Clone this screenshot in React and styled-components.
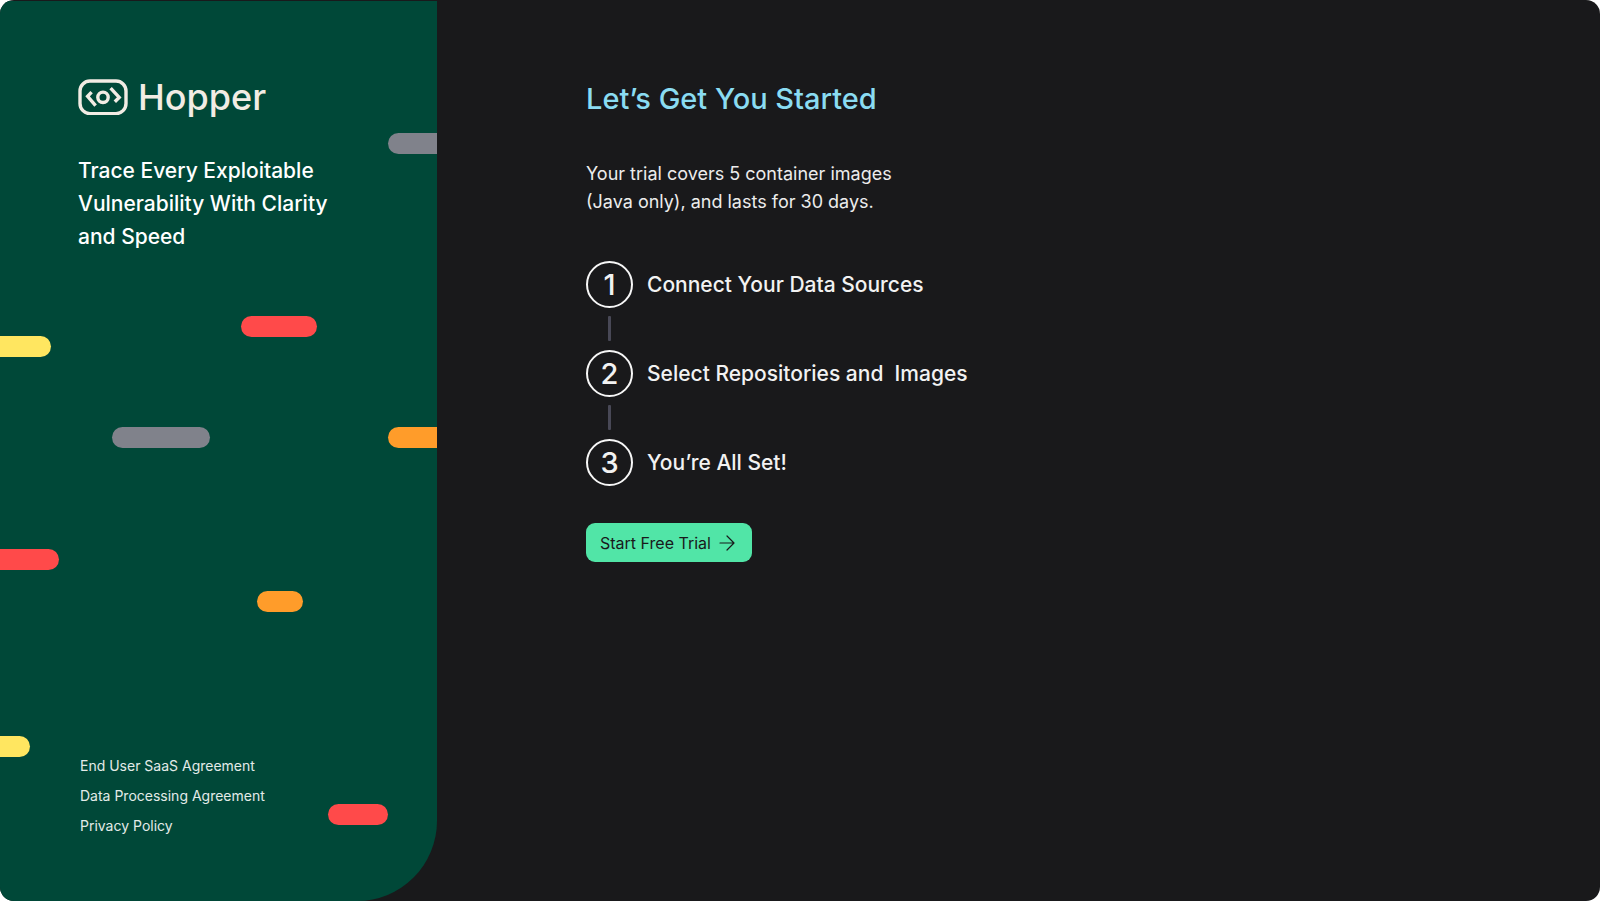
import React from 'react';
import styled, { createGlobalStyle } from 'styled-components';

const GlobalStyle = createGlobalStyle`
  *, *::before, *::after { box-sizing: border-box; }
  body {
    margin: 0;
    background: #ffffff;
    font-family: Inter, "Liberation Sans", sans-serif;
  }
`;

const Page = styled.div`
  display: flex;
  min-height: 100vh;
  padding-top: 1px;
  border-radius: 14px;
  overflow: hidden;
  background: #19191b;
`;

const Sidebar = styled.aside`
  position: relative;
  display: flex;
  flex-direction: column;
  justify-content: space-between;
  flex: 0 0 437px;
  padding: 78px 78px 65px;
  overflow: hidden;
  border-bottom-right-radius: 80px;
  background: #004838;
`;

const Decor = styled.div`
  position: absolute;
  inset: 0;
`;

const pillColors = {
  red: '#ff4a4a',
  yellow: '#ffe660',
  orange: '#ff9c2a',
  gray: '#80828b',
};

const Pill = styled.span`
  position: absolute;
  top: ${(p) => p.$top}px;
  left: ${(p) => p.$left}px;
  width: ${(p) => p.$width}px;
  height: 21px;
  border-radius: 11px;
  background: ${(p) => pillColors[p.$color]};
`;

const Intro = styled.div`
  position: relative;
  display: flex;
  flex-direction: column;
  gap: 39px;
`;

const Brand = styled.div`
  display: flex;
  align-items: center;
  gap: 10px;
  height: 36px;
  color: #f2ece4;
`;

const BrandName = styled.span`
  font-size: 36px;
  line-height: 36px;
  font-weight: 500;
`;

const Tagline = styled.p`
  margin: 0;
  color: #ffffff;
  font-size: 21px;
  line-height: 33px;
  font-weight: 500;
  white-space: nowrap;
`;

const LegalNav = styled.nav`
  position: relative;
  display: flex;
  flex-direction: column;
  align-items: flex-start;
  gap: 10px;
  padding-left: 2px;
`;

const LegalLink = styled.a`
  color: #e3ebe8;
  font-size: 14px;
  line-height: 20px;
  text-decoration: none;
`;

const Main = styled.main`
  flex: 1;
  padding: 78px 149px;
`;

const Title = styled.h1`
  margin: 0 0 41px;
  color: #8adcf2;
  font-size: 29px;
  line-height: 40px;
  font-weight: 500;
`;

const Lead = styled.p`
  margin: 0 0 45px;
  color: #ececec;
  font-size: 18px;
  line-height: 28px;
`;

const Steps = styled.ol`
  display: flex;
  flex-direction: column;
  gap: 42px;
  margin: 0 0 37px;
  padding: 0;
  list-style: none;
`;

const Step = styled.li`
  position: relative;
  display: flex;
  align-items: center;
  gap: 14px;
  color: #f2f2f2;
  font-size: 21px;
  line-height: 31px;
  font-weight: 500;
  white-space: pre;

  &:not(:last-child)::after {
    content: "";
    position: absolute;
    top: calc(100% + 8px);
    left: 22px;
    width: 3px;
    height: 25px;
    border-radius: 1px;
    background: #484856;
  }
`;

const StepNumber = styled.span`
  display: flex;
  align-items: center;
  justify-content: center;
  width: 47px;
  height: 47px;
  border: 2px solid #f7f7f7;
  border-radius: 50%;
  font-size: 29px;
`;

const StartButton = styled.button`
  display: flex;
  align-items: center;
  gap: 8px;
  height: 39px;
  padding: 0 17px 0 14px;
  border: 0;
  border-radius: 9px;
  background: #51e5a7;
  color: #19191b;
  font-family: inherit;
  font-size: 16px;
  line-height: 24px;
  cursor: pointer;
`;

const pills = [
  { color: 'gray', left: 388, top: 132, width: 80 },
  { color: 'red', left: 241, top: 315, width: 76 },
  { color: 'yellow', left: -30, top: 335, width: 81 },
  { color: 'gray', left: 112, top: 426, width: 98 },
  { color: 'orange', left: 388, top: 426, width: 80 },
  { color: 'red', left: -30, top: 548, width: 89 },
  { color: 'orange', left: 257, top: 590, width: 46 },
  { color: 'yellow', left: -30, top: 735, width: 60 },
  { color: 'red', left: 328, top: 803, width: 60 },
];

const steps = ['Connect Your Data Sources', 'Select Repositories and  Images', 'You’re All Set!'];

const legal = ['End User SaaS Agreement', 'Data Processing Agreement', 'Privacy Policy'];

function LogoMark() {
  return (
    <svg width="50" height="36" viewBox="0 0 50 36" fill="none" stroke="currentColor" strokeWidth="3.4" aria-hidden="true">
      <rect x="2" y="2" width="46" height="32.6" rx="10" />
      <circle cx="25" cy="18.3" r="5.2" />
      <path d="M13.6 13.2 9.6 17.4l8 9.2" />
      <path d="M32.6 9.2 41.2 18.4 36.8 22.8" />
    </svg>
  );
}

function ArrowIcon() {
  return (
    <svg width="16" height="16" viewBox="0 0 16 16" fill="none" stroke="currentColor" strokeWidth="1.2" strokeLinecap="round" strokeLinejoin="round" aria-hidden="true">
      <path d="M1 8h14M8 1l7 7-7 7" />
    </svg>
  );
}

export default function App() {
  return (
    <Page>
      <GlobalStyle />
      <Sidebar>
        <Decor aria-hidden="true">
          {pills.map((p) => (
            <Pill key={`${p.left}-${p.top}`} $color={p.color} $left={p.left} $top={p.top} $width={p.width} />
          ))}
        </Decor>
        <Intro>
          <Brand>
            <LogoMark />
            <BrandName>Hopper</BrandName>
          </Brand>
          <Tagline>
            Trace Every Exploitable
            <br />
            Vulnerability With Clarity
            <br />
            and Speed
          </Tagline>
        </Intro>
        <LegalNav aria-label="Legal">
          {legal.map((name) => (
            <LegalLink key={name} href="#">{name}</LegalLink>
          ))}
        </LegalNav>
      </Sidebar>
      <Main>
        <Title>Let’s Get You Started</Title>
        <Lead>
          Your trial covers 5 container images
          <br />
          (Java only), and lasts for 30 days.
        </Lead>
        <Steps>
          {steps.map((label, i) => (
            <Step key={label}>
              <StepNumber>{i + 1}</StepNumber>
              <span>{label}</span>
            </Step>
          ))}
        </Steps>
        <StartButton type="button">
          Start Free Trial
          <ArrowIcon />
        </StartButton>
      </Main>
    </Page>
  );
}
